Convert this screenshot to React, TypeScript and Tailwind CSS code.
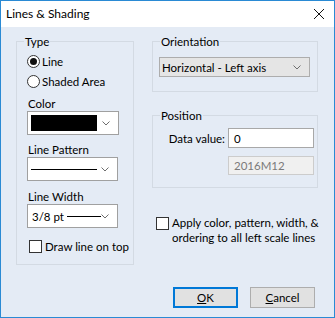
import React from "react";

const BG = "bg-[#e4ebf5]";

function Chevron() {
  return (
    <svg width="8" height="5" viewBox="0 0 8 5" className="shrink-0 mr-[1px]">
      <polyline points="0.5,0.5 4,4 7.5,0.5" fill="none" stroke="#6e6e6e" strokeWidth="1" />
    </svg>
  );
}

function GroupLabel({ children }: { children: React.ReactNode }) {
  return (
    <span className={`self-start -mt-[8px] ml-[7px] px-[1px] leading-[15px] h-[15px] ${BG} text-[#000] whitespace-nowrap`}>
      {children}
    </span>
  );
}

function Checkbox() {
  return <span className="block w-[13px] h-[13px] border border-[#333] bg-white shrink-0" />;
}

export default function App() {
  return (
    <div
      className="w-[335px] h-[318px] border border-[#2a8ad4] bg-white flex flex-col text-[11.5px] text-black overflow-hidden whitespace-nowrap"
      style={{ fontFamily: 'Lato, "Noto Sans", sans-serif' }}
    >
      {/* Title bar */}
      <div className="h-[26px] shrink-0 bg-white flex items-center justify-between pl-[5px] pr-[10px]">
        <span className="text-[12px] leading-[15px] -mt-[2px]">Lines &amp; Shading</span>
        <svg width="10" height="10" viewBox="0 0 10 10" className="-mt-[1px]">
          <line x1="0" y1="0" x2="10" y2="10" stroke="#111" strokeWidth="1" />
          <line x1="10" y1="0" x2="0" y2="10" stroke="#111" strokeWidth="1" />
        </svg>
      </div>

      {/* Body */}
      <div className={`flex-1 ${BG} flex flex-col`}>
        <div className="flex items-start">
          {/* Type group */}
          <div className="ml-[15px] mt-[14px] w-[118px] h-[224px] border border-[#d3dae3] flex flex-col">
            <GroupLabel>Type</GroupLabel>
            <div className="mt-[6px] ml-[10px] flex items-center h-[13px]">
              <span className="w-[13px] h-[13px] rounded-full border border-[#333] bg-white flex items-center justify-center">
                <span className="w-[7px] h-[7px] rounded-full bg-[#111]" />
              </span>
              <span className="ml-[2px] leading-[15px]">Line</span>
            </div>
            <div className="mt-[7px] ml-[10px] flex items-center h-[13px]">
              <span className="w-[13px] h-[13px] rounded-full border border-[#333] bg-white" />
              <span className="ml-[2px] leading-[15px]">Shaded Area</span>
            </div>

            <span className="mt-[9px] ml-[11px] leading-[14px]">Color</span>
            <div className="ml-[10px] w-[92px] h-[24px] border border-[#a0a0a0] bg-white flex items-center pl-[3px] pr-[7px] justify-between">
              <span className="block w-[66px] h-[16px] bg-black" />
              <Chevron />
            </div>

            <span className="mt-[8px] ml-[11px] leading-[14px]">Line Pattern</span>
            <div className="ml-[10px] w-[91px] h-[24px] border border-[#a0a0a0] bg-white flex items-center pl-[3px] pr-[7px] justify-between">
              <span className="block w-[66px] h-[1px] bg-black" />
              <Chevron />
            </div>

            <span className="mt-[9px] ml-[11px] leading-[14px]">Line Width</span>
            <div className="ml-[10px] w-[91px] h-[24px] border border-[#a0a0a0] bg-white flex items-center pl-[4px] pr-[7px] justify-between">
              <span className="flex items-center">
                <span className="leading-[15px]">3/8 pt</span>
                <span className="block ml-[3px] w-[34px] h-[1px] bg-black" />
              </span>
              <Chevron />
            </div>

            <div className="mt-[12px] ml-[12px] flex items-center h-[13px]">
              <Checkbox />
              <span className="ml-[3px] leading-[15px]">Draw line on top</span>
            </div>
          </div>

          {/* Right column */}
          <div className="ml-[18px] w-[166px] flex flex-col">
            <div className="mt-[14px] h-[51px] border border-[#d3dae3] flex flex-col">
              <GroupLabel>Orientation</GroupLabel>
              <div className="mt-[8px] ml-[6px] w-[151px] h-[20px] border border-[#adadad] bg-[#e5e5e5] flex items-center justify-between pl-[2px] pr-[7px]">
                <span className="leading-[15px]">Horizontal - Left axis</span>
                <Chevron />
              </div>
            </div>

            <div className="mt-[23px] h-[73px] border border-[#d3dae3] flex flex-col">
              <GroupLabel>Position</GroupLabel>
              <div className="mt-[5px] flex items-center">
                <span className="w-[72px] text-right leading-[15px]">Data value:</span>
                <div className="ml-[3px] w-[86px] h-[20px] border border-[#a8a8a8] bg-white flex items-center pl-[5px]">
                  <span className="leading-[15px]">0</span>
                </div>
              </div>
              <div className="mt-[8px] ml-[75px] w-[86px] h-[19px] border border-[#cccccc] bg-[#f0f0f0] flex items-center pl-[5px]">
                <span className="leading-[15px] text-[#7a7a7a]">2016M12</span>
              </div>
            </div>

            <div className="mt-[27px] ml-[4px] flex items-start">
              <div className="mt-[2px]">
                <Checkbox />
              </div>
              <span className="ml-[3px] leading-[15px]">
                Apply color, pattern, width, &amp;
                <br />
                ordering to all left scale lines
              </span>
            </div>
          </div>
        </div>

        {/* Buttons */}
        <div className="mt-[22px] flex justify-end pr-[19px] gap-[12px]">
          <button className="w-[65px] h-[21px] border-2 border-[#0078d7] bg-[#e1e1e1] flex items-center justify-center leading-[15px]">
            <span><span className="underline">O</span>K</span>
          </button>
          <button className="w-[65px] h-[21px] border border-[#adadad] bg-[#e1e1e1] flex items-center justify-center leading-[15px]">
            <span><span className="underline">C</span>ancel</span>
          </button>
        </div>
      </div>
    </div>
  );
}
